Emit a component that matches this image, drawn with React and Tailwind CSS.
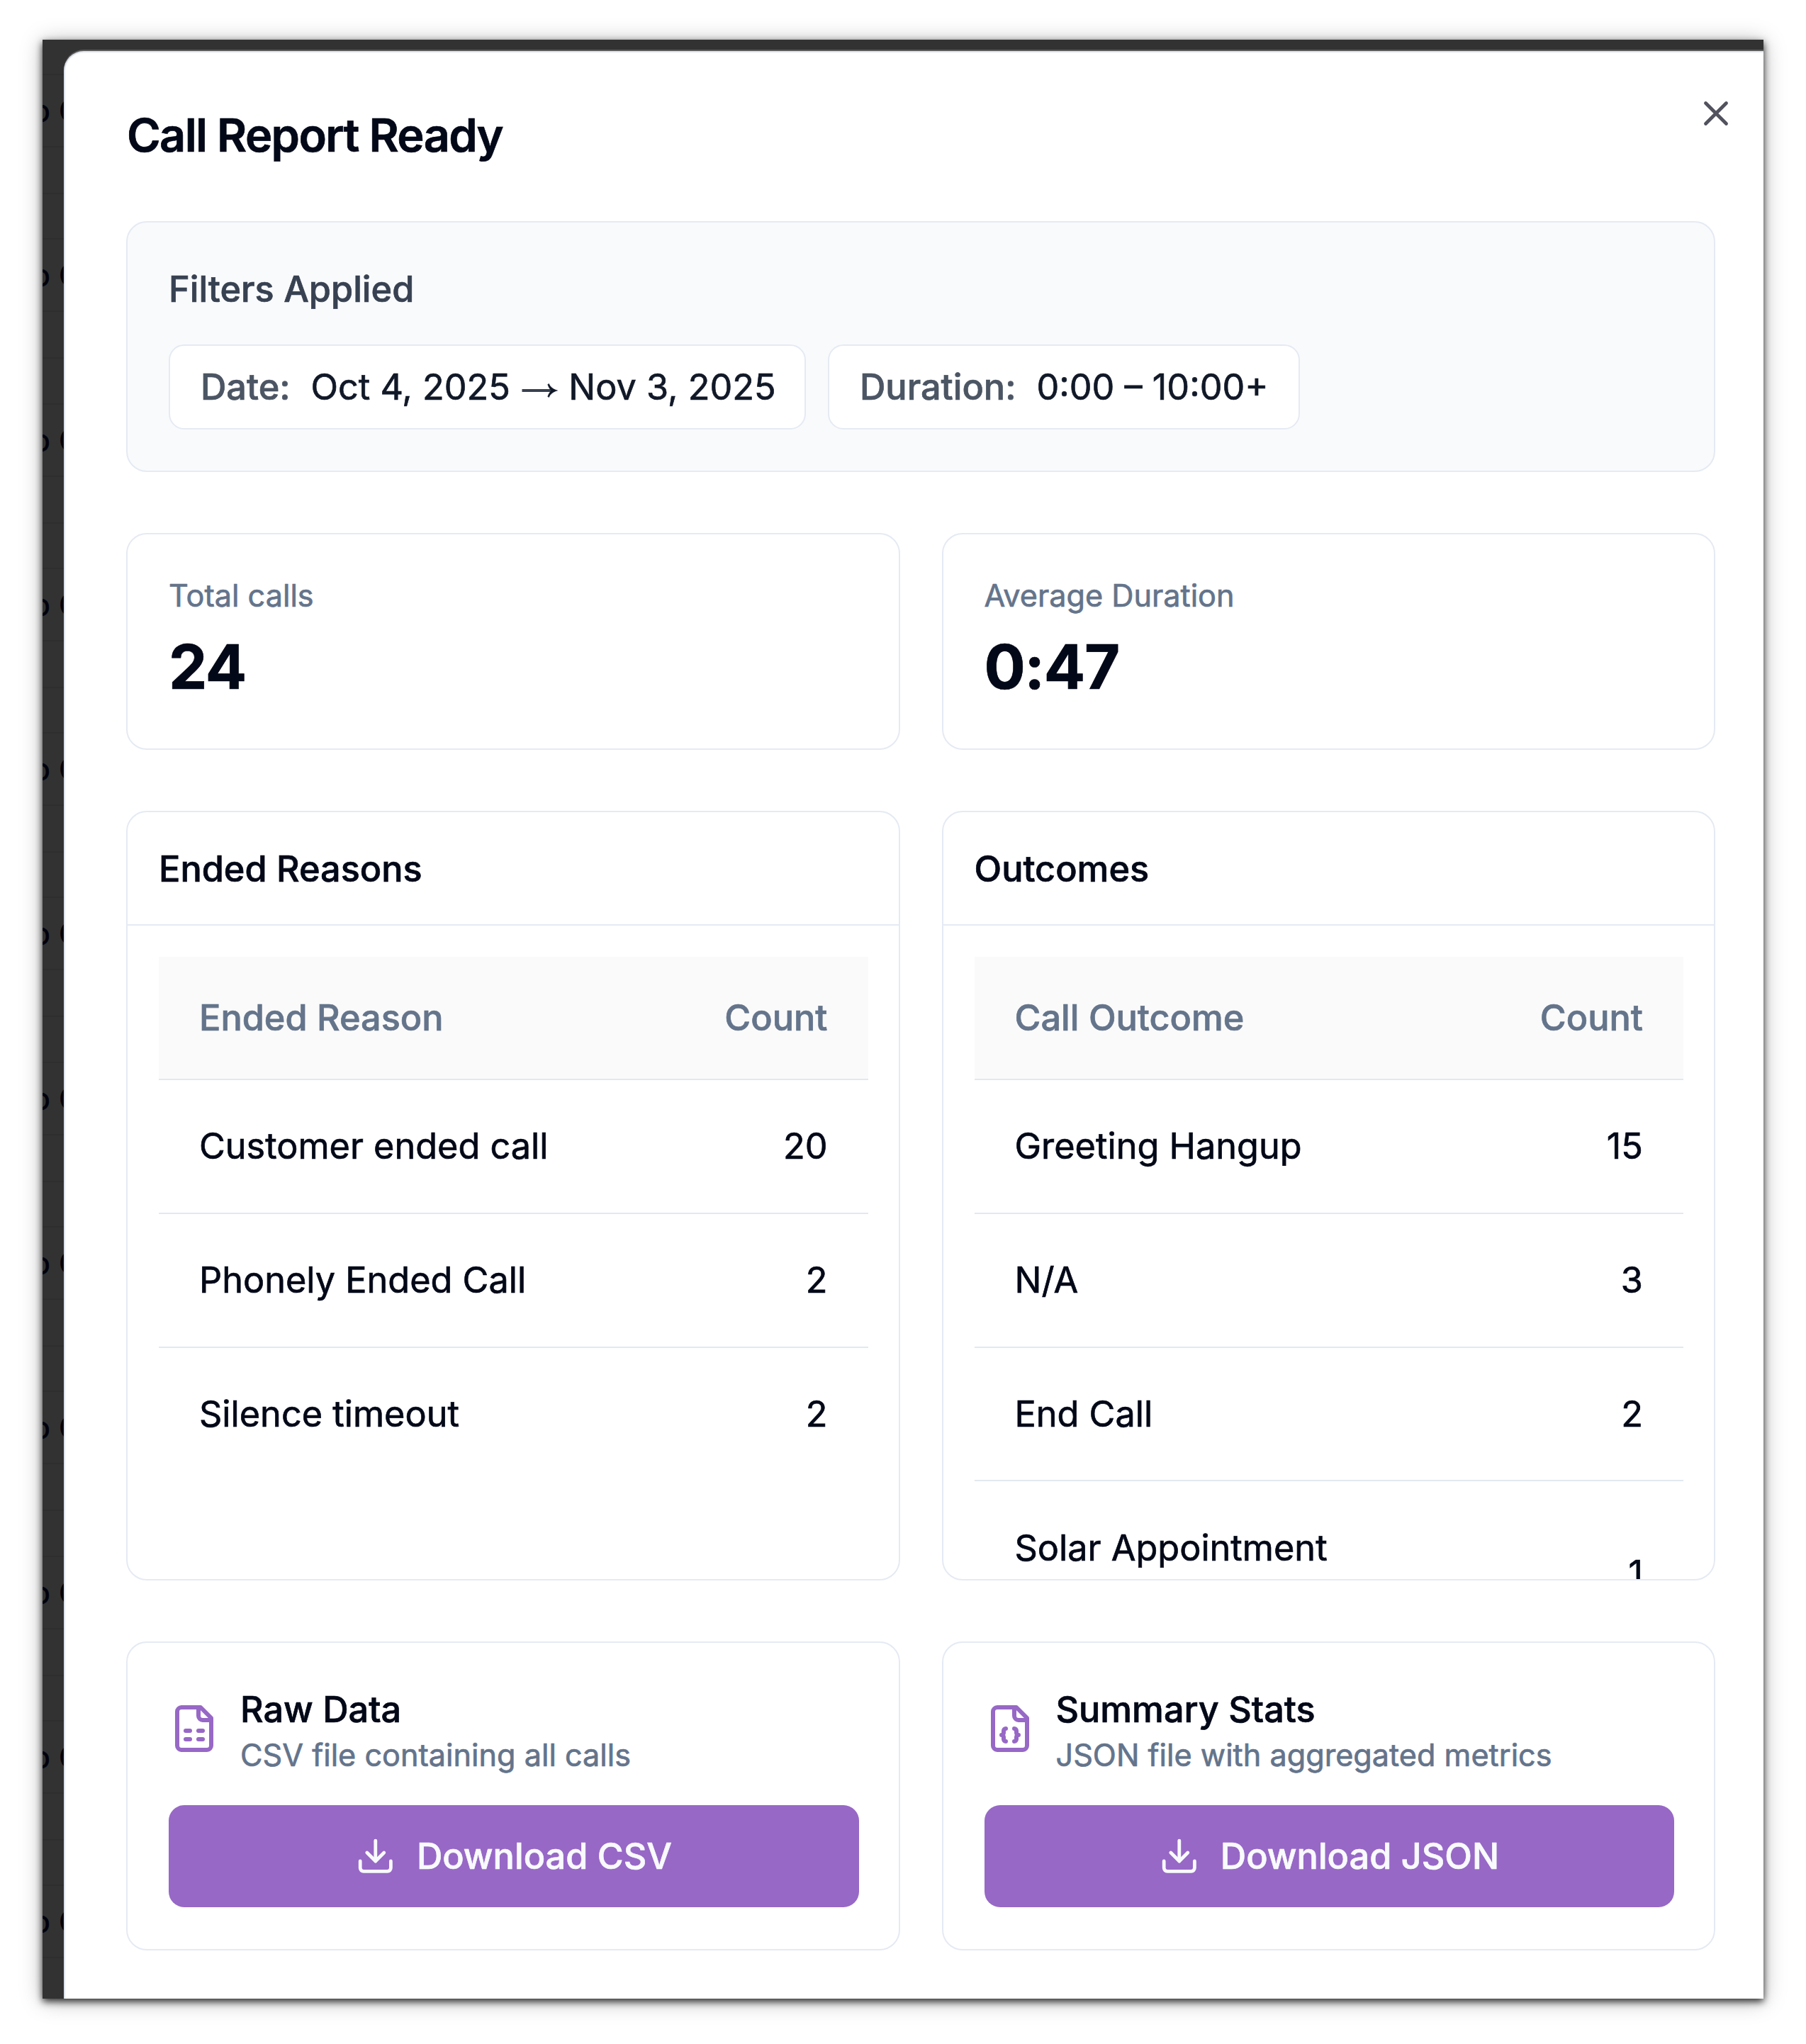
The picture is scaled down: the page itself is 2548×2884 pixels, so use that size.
import React from "react";

const BACKDROP_ROWS = Array.from({ length: 12 }, (_, i) => i);

function BackdropStrip() {
  return (
    <div className="w-[30px] shrink-0 overflow-hidden bg-[#323232] text-[#02020c]">
      <div className="h-[48px]" />
      {BACKDROP_ROWS.map((i) => (
        <div key={i} className="h-[232.3px] border-t-2 border-[#2e2e2e]">
          <div className="h-[102px] border-b-2 border-[#2e2e2e] pt-[14px]">
            <div className="-ml-[15px] whitespace-nowrap text-[43.2px] leading-[72px]">o C</div>
          </div>
          <div className="h-[66px] border-b-2 border-[#2e2e2e]" />
        </div>
      ))}
    </div>
  );
}

function LongArrow() {
  return (
    <svg viewBox="0 0 54 20" role="img" aria-label="to" className="mb-[3.5px] inline-block h-[20px] w-[54px] align-baseline" fill="none">
      <path d="M2.5 10H48" stroke="#3a4150" strokeWidth="3.8" />
      <path d="M40.5 0.5C42 4.5 46 8.3 52.5 10C46 11.700 42 15.500 40.500 19.500L38.800 18.600C40 15 41.500 12.500 43.800 10C41.500 7.500 40 5 38.800 1.400Z" fill="#111827" stroke="#111827" strokeWidth="0.6" />
    </svg>
  );
}

function Chip({ label, children, width }) {
  return (
    <div className={`flex h-[120px] items-center gap-[29px] rounded-[22px] border-2 border-[#e5eaf3] bg-white px-[43px] ${width}`}>
      <span className="font-medium text-[#4b5563]">{label}</span>
      <span className="whitespace-nowrap text-[#111827]">{children}</span>
    </div>
  );
}

function StatCard({ label, value }) {
  return (
    <div className="h-[306px] rounded-[29px] border-2 border-[#e5eaf3] px-[58px] pt-[58px]">
      <div className="text-[43.2px] leading-[57.6px] text-[#64748b]">{label}</div>
      <div className="mt-[13px] text-[86.4px] leading-[115.2px] font-bold tracking-[-0.016em]">{value}</div>
    </div>
  );
}

function TableCard({ title, column, rows }) {
  return (
    <div className="h-[1086px] overflow-hidden rounded-[29px] border-2 border-[#e5eaf3]">
      <div className="flex h-[160px] items-center border-b-2 border-[#e5eaf3] px-[44px] pt-px font-medium">{title}</div>
      <div className="pt-[44px] pr-[43px] pl-[44px]">
        <div className="flex h-[174px] items-center justify-between border-b-2 border-[#e2e8f0] bg-[#fafafa] pr-[57px] pl-[57px] font-medium text-[#64748b]">
          <span>{column}</span>
          <span>Count</span>
        </div>
        {rows.map(([name, count], i) => (
          <div
            key={name}
            className={`flex items-center justify-between border-[#e2e8f0] py-[57.4px] pr-[57px] pl-[57px] ${i < rows.length - 1 ? "border-b-2" : ""}`}
          >
            <span className="w-[500px]">{name}</span>
            <span>{count}</span>
          </div>
        ))}
      </div>
    </div>
  );
}

function SheetIcon() {
  return (
    <svg viewBox="0 0 24 24" className="mb-[3px] size-[72px] shrink-0" fill="none" stroke="#9768c6" strokeWidth="2" strokeLinecap="round" strokeLinejoin="round">
      <path d="M15 2H6a2 2 0 0 0-2 2v16a2 2 0 0 0 2 2h12a2 2 0 0 0 2-2V7Z" />
      <path d="M14 2v4a2 2 0 0 0 2 2h4" />
      <path d="M8 13h2" />
      <path d="M14 13h2" />
      <path d="M8 17h2" />
      <path d="M14 17h2" />
    </svg>
  );
}

function JsonIcon() {
  return (
    <svg viewBox="0 0 24 24" className="mb-[3px] size-[72px] shrink-0" fill="none" stroke="#9768c6" strokeWidth="2" strokeLinecap="round" strokeLinejoin="round">
      <path d="M15 2H6a2 2 0 0 0-2 2v16a2 2 0 0 0 2 2h12a2 2 0 0 0 2-2V7Z" />
      <path d="M14 2v4a2 2 0 0 0 2 2h4" />
      <path d="M10 12a1 1 0 0 0-1 1v1a1 1 0 0 1-1 1 1 1 0 0 1 1 1v1a1 1 0 0 0 1 1" />
      <path d="M14 18a1 1 0 0 0 1-1v-1a1 1 0 0 1 1-1 1 1 0 0 1-1-1v-1a1 1 0 0 0-1-1" />
    </svg>
  );
}

function DownloadIcon() {
  return (
    <svg viewBox="0 0 24 24" className="size-[57.6px] shrink-0" fill="none" stroke="currentColor" strokeWidth="2" strokeLinecap="round" strokeLinejoin="round">
      <path d="M21 15v4a2 2 0 0 1-2 2H5a2 2 0 0 1-2-2v-4" />
      <path d="m7 10 5 5 5-5" />
      <path d="M12 15V3" />
    </svg>
  );
}

function DownloadCard({ icon, title, description, action }) {
  return (
    <div className="h-[436px] rounded-[29px] border-2 border-[#e5eaf3] pt-[58px] pr-[56px] pl-[58px]">
      <div className="flex items-center gap-[29px]">
        {icon}
        <div>
          <div className="leading-[72px] font-medium">{title}</div>
          <div className="text-[43.2px] leading-[57.6px] text-[#64748b]">{description}</div>
        </div>
      </div>
      <button className="mt-[41.4px] flex h-[144px] w-full items-center justify-center gap-[28.8px] rounded-[22px] bg-[#9768c6] font-medium text-[#f8fafc]">
        <DownloadIcon />
        {action}
      </button>
    </div>
  );
}

export default function App() {
  return (
    <div className="h-[2884px] w-[2548px] overflow-hidden bg-white px-[60px] pt-[56px] font-['Inter',sans-serif] text-[50.4px] leading-[72px] text-[#020817] antialiased [-webkit-text-stroke:0.7px_currentColor] [font-variation-settings:'opsz'_14]">
      <div className="flex h-[2764px] w-[2428px] bg-[#323232] shadow-[0_4px_10px_rgba(0,0,0,0.8),0_3px_30px_rgba(0,0,0,0.28)]">
        <BackdropStrip />
        <div className="flex min-w-0 flex-1 flex-col pt-[16px]">
          <div className="relative flex-1 rounded-tl-[28px] border-t-2 border-l-2 border-[#dde3ec] bg-white pt-[83.5px] pr-[68px] pl-[86px] shadow-[0_-2px_0_#5a5a5a]">
            <button aria-label="Close" className="absolute top-[57px] right-[38px]">
              <svg viewBox="0 0 24 24" className="size-[58px]" fill="none" stroke="#51525e" strokeWidth="2" strokeLinecap="round">
                <path d="M18 6 6 18M6 6l12 12" />
              </svg>
            </button>
            <h1 className="ml-px text-[64.8px] leading-[65px] font-semibold tracking-[-0.025em]">Call Report Ready</h1>
            <section className="mt-[89.5px] h-[354px] rounded-[29px] border-2 border-[#e5eaf3] bg-[#f9fafc] px-[58px] pt-[58px]">
              <h2 className="font-medium text-[#374151]">Filters Applied</h2>
              <div className="mt-[42px] flex gap-[31px]">
                <Chip label="Date:" width="w-[899px]">
                  Oct 4, 2025 <LongArrow /> Nov 3, 2025
                </Chip>
                <Chip label="Duration:" width="w-[666px]">
                  0:00 – 10:00+
                </Chip>
              </div>
            </section>
            <section className="mt-[86px] grid grid-cols-2 gap-[59px]">
              <StatCard label="Total calls" value="24" />
              <StatCard label="Average Duration" value="0:47" />
            </section>
            <section className="mt-[86px] grid grid-cols-2 gap-[59px]">
              <TableCard
                title="Ended Reasons"
                column="Ended Reason"
                rows={[
                  ["Customer ended call", "20"],
                  ["Phonely Ended Call", "2"],
                  ["Silence timeout", "2"],
                ]}
              />
              <TableCard
                title="Outcomes"
                column="Call Outcome"
                rows={[
                  ["Greeting Hangup", "15"],
                  ["N/A", "3"],
                  ["End Call", "2"],
                  ["Solar Appointment Booked", "1"],
                ]}
              />
            </section>
            <section className="mt-[86px] grid grid-cols-2 gap-[59px]">
              <DownloadCard icon={<SheetIcon />} title="Raw Data" description="CSV file containing all calls" action="Download CSV" />
              <DownloadCard icon={<JsonIcon />} title="Summary Stats" description="JSON file with aggregated metrics" action="Download JSON" />
            </section>
          </div>
        </div>
      </div>
    </div>
  );
}
